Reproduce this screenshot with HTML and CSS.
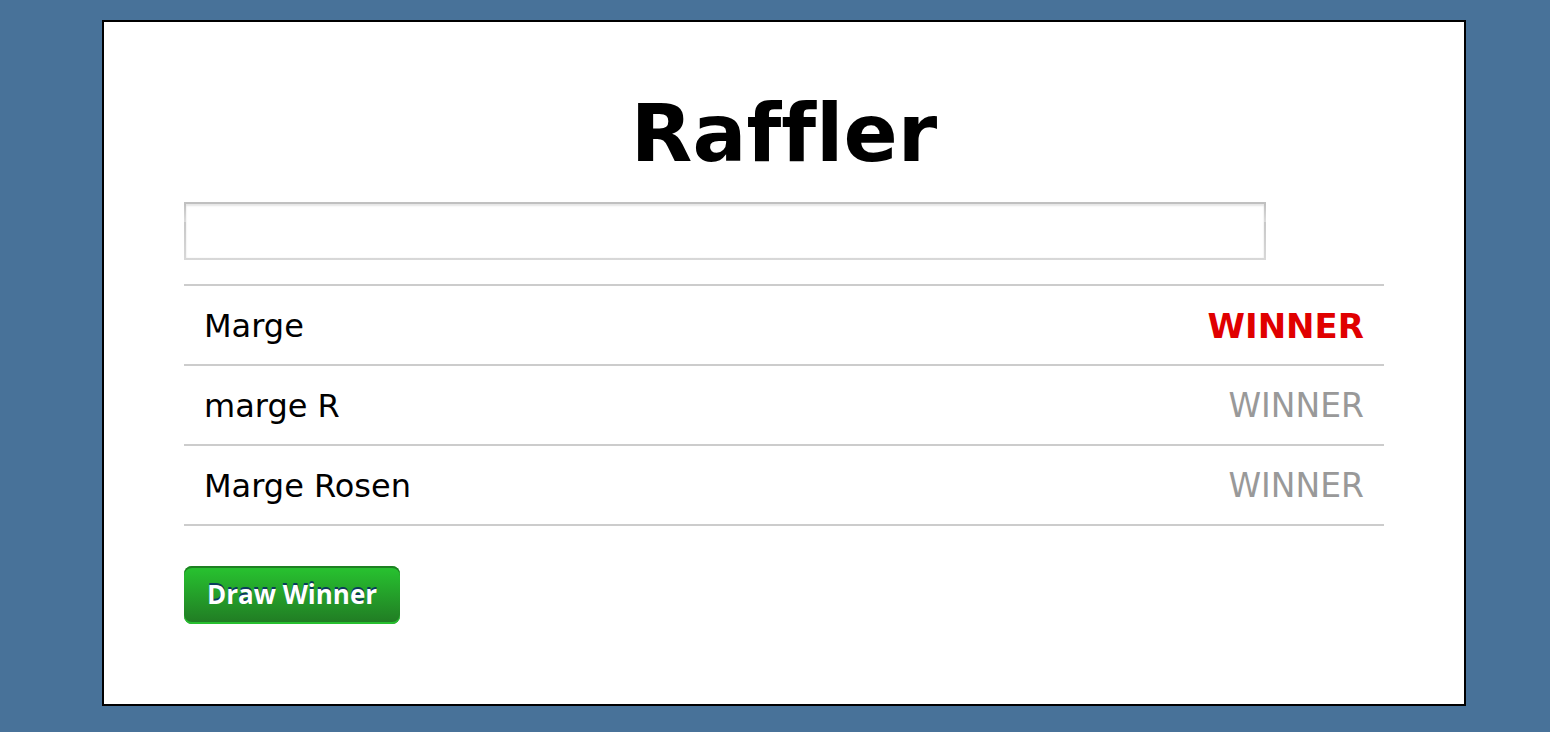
FILE: index.html
```html
<!DOCTYPE html>
<html lang="en">
<head>
<meta charset="utf-8">
<title>Raffler</title>
<link rel="stylesheet" href="styles.css">
</head>
<body>
<main class="container">
  <h1 class="title">Raffler</h1>
  <form class="raffle">
    <input class="entry-input" type="text" aria-label="New entry">
    <ul class="entries">
      <li class="entry"><span>Marge</span><strong class="winner winner-latest">WINNER</strong></li>
      <li class="entry"><span>marge R</span><span class="winner">WINNER</span></li>
      <li class="entry"><span>Marge Rosen</span><span class="winner">WINNER</span></li>
    </ul>
    <button class="draw" type="button">Draw Winner</button>
  </form>
</main>
</body>
</html>
```
FILE: styles.css
```css
* { box-sizing: border-box; }
body {
  margin: 0;
  padding: 20px 84px 26px 102px;
  background: #487299;
  color: #000;
  font-family: Verdana, "DejaVu Sans", sans-serif;
  font-size: 32px;
}
.container {
  padding: 62px 80px 80px;
  background: #fff;
  border: 2px solid #000;
}
.title {
  margin: 0 0 18px;
  font-size: 80px;
  line-height: 100px;
  text-align: center;
  font-variant-ligatures: none;
}
.entry-input {
  display: block;
  width: calc(90% + 2px);
  height: 58px;
  padding: 4px 10px;
  border: 2px solid #d6d6d6;
  border-image: linear-gradient(#c0c0c0 2px, #dcdcdc 20px, #c8c8c8 20px, #d8d8d8) 2;
  border-radius: 0;
  background: #fff;
  box-shadow: inset 0 2px 2px #e6e6e6, inset 0 0 2px #eee;
  font: inherit;
}
.entries {
  margin: 24px 0 40px;
  padding: 0;
  list-style: none;
  border-top: 2px solid #ccc;
}
.entry {
  display: flex;
  align-items: center;
  justify-content: space-between;
  padding: 21px 20px 19px;
  border-bottom: 2px solid #ccc;
  line-height: 38px;
}
.winner {
  color: #999;
  font-size: 33px;
}
.winner-latest {
  color: #e00000;
  font-size: 34px;
}
.draw {
  display: block;
  height: 58px;
  padding: 0 22px 2px;
  min-width: 216px;
  border: 0;
  border-radius: 8px;
  background: linear-gradient(#27bf2f 4px, #217d24 56px);
  box-shadow: inset 0 2px #1d8022, inset 0 -2px #27bf2f;
  color: #fff;
  font: bold 26px/54px "Open Sans", sans-serif;
  text-shadow: 0 -2px 0 #0b3a5c;
}
```
